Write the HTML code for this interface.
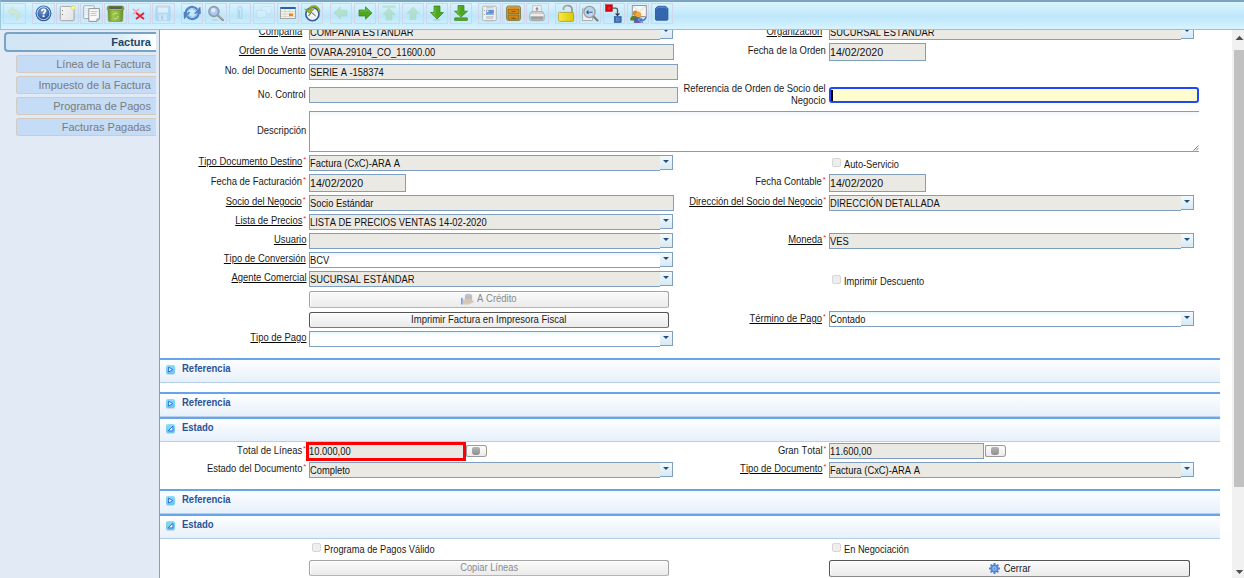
<!DOCTYPE html><html><head><meta charset="utf-8"><style>
*{box-sizing:border-box}
html,body{margin:0;padding:0;width:1244px;height:578px;overflow:hidden;background:#fff;font-family:"Liberation Sans",sans-serif;font-kerning:none}
.a{position:absolute}
#tb{left:0;top:0;width:1244px;height:30px;border-top:2px solid #7ca4be;border-bottom:1px solid #94c2d6;border-left:1px solid #9cc6da;
 background:linear-gradient(#dbf4fe 0%,#cbedfd 30%,#bde6fa 52%,#caedfd 78%,#d9f3fe 100%)}
.tbb{position:absolute;top:3px;width:22px;height:21px;border:1px solid #d0d5ea}
.tbb svg{position:absolute;left:2px;top:1px;width:16px;height:16px;overflow:visible}
#sb{left:0;top:30px;width:160px;height:548px;background:#e1eaf5;border-right:1px solid #7ba3c3}
.tab{position:absolute;right:3px;height:18px;text-align:right;font-size:11px;color:#7b7b7b;padding-right:5px;line-height:16px;
 background:#c5dcf6;border:1px solid #d3cbc2;border-right:none;border-radius:3px 0 0 3px}
.tab.sel{border:2px solid #77a4c4;border-right:none;border-radius:4px 0 0 4px;color:#1d4669;font-weight:bold;
 background:linear-gradient(90deg,#d2e5f3 0%,#d6e8f5 70%,#ffffff 100%);line-height:17px}
.l{position:absolute;font-size:10px;color:#1a1a1a;white-space:nowrap;text-align:right;line-height:11px;transform:scaleX(0.944);transform-origin:100% 0}
.l u{text-decoration:underline;text-decoration-thickness:1px;text-underline-offset:0.6px;text-decoration-color:#000}
.r{color:#e03030;font-size:8px;position:relative;top:-3px;margin-left:1px}
.f{position:absolute;height:16px;border:1px solid #7f9fbe;background:#ebe9e4;color:#111;line-height:14px;white-space:nowrap;overflow:hidden}
.f span{display:inline-block;font-size:10px;transform:scaleX(0.935);transform-origin:0 0;position:relative;top:-1px;left:-0.5px}
.f.w{background:linear-gradient(#e4f5fb,#ffffff 4px)}
.cb{position:absolute;width:13px;height:15px;border:1px solid #7f9fbe;border-left:none;background:linear-gradient(#f4f9fc,#d6e9f5)}
.cb:after{content:"";position:absolute;left:3px;top:4px;border-left:3px solid transparent;border-right:3px solid transparent;border-top:3.5px solid #1d4f80}
.btn{position:absolute;height:17px;border:1px solid #a3a3a3;border-bottom-color:#b4b4b4;border-radius:2.5px;box-shadow:inset 1px 1px 0 #fff;background:linear-gradient(#fafafa,#ebebeb);text-align:center;line-height:14px;color:#1a1a1a}
.btn span{display:inline-block;font-size:10px;transform:scaleX(.95);text-indent:0;position:relative;top:-2px}
.btn.d{border-color:#555;border-bottom-color:#7a7a7a}
.chk{position:absolute;width:9px;height:9px;border:1px solid #d6d6d6;border-radius:2px;background:#eeeeee}
.ct{position:absolute;font-size:10px;color:#1a1a1a;white-space:nowrap;line-height:11px;transform:scaleX(.925);transform-origin:0 0}
.sec{position:absolute;left:160px;width:1060px;border-top:2px solid #66a5ec;border-bottom:1px solid #b5cfeb;background:linear-gradient(#fdfeff,#e7f0fa)}
.sec b{position:absolute;left:22px;top:3px;font-size:10px;color:#2a5399;line-height:11px;transform:scaleX(.95);transform-origin:0 0}
.si{position:absolute;left:6px;top:5px;width:9px;height:9px;border-radius:2px;background:linear-gradient(#8fdcf6,#62c5ec);box-shadow:0 1px 0 rgba(0,0,0,.12)}
.calc{position:absolute;width:21px;height:12px;border:1px solid #9a9a9a;border-right-color:#a09a80;border-radius:2px 3px 3px 2px;background:linear-gradient(#fcfcfc,#ececec)}
.calc:after{content:"";position:absolute;left:5px;top:1px;width:8px;height:8px;background:linear-gradient(#b5b5b5,#8f8f8f);border-radius:2px 2px 3px 3px}
</style></head><body>
<div id="sb" class="a">
<div class="tab sel" style="top:2px;left:4px;right:3px;height:20px">Factura</div>
<div class="tab" style="top:25px;left:16px">Línea de la Factura</div>
<div class="tab" style="top:46px;left:16px">Impuesto de la Factura</div>
<div class="tab" style="top:67px;left:16px">Programa de Pagos</div>
<div class="tab" style="top:88px;left:16px">Facturas Pagadas</div>
</div>
<div class="l" style="right:938px;top:26px"><u>Compañía</u><span class="r">*</span></div>
<div class="f" style="left:309px;top:24px;width:351px;height:16px;border-right:none"><span>COMPAÑÍA ESTÁNDAR</span></div>
<div class="cb" style="left:660px;top:24px"></div>
<div class="l" style="right:418px;top:26px"><u>Organización</u><span class="r">*</span></div>
<div class="f" style="left:829px;top:24px;width:352px;height:16px;border-right:none"><span>SUCURSAL ESTÁNDAR</span></div>
<div class="cb" style="left:1181px;top:24px"></div>
<div class="l" style="right:938px;top:45px"><u>Orden de Venta</u></div>
<div class="f" style="left:309px;top:44px;width:365px;height:16px"><span>OVARA-29104_CO_11600.00</span></div>
<div class="l" style="right:418px;top:45px">Fecha de la Orden</div>
<div class="f" style="left:829px;top:43px;width:97px;height:18px;line-height:16px"><span style="font-size:11px;transform:scaleX(.965)">14/02/2020</span></div>
<div class="l" style="right:938px;top:65px">No. del Documento</div>
<div class="f" style="left:309px;top:64px;width:369px;height:16px"><span>SERIE A -158374</span></div>
<div class="l" style="right:938px;top:89px">No. Control</div>
<div class="f" style="left:309px;top:87px;width:369px;height:16px"><span></span></div>
<div class="l" style="right:418px;top:83px;line-height:12px">Referencia de Orden de Socio del<br>Negocio</div>
<div class="a" style="left:829px;top:87px;width:370px;height:16px;border:2px solid #1f48f8;border-radius:3px;background:#fffccf"><div class="a" style="left:0px;top:1px;width:1.5px;height:11px;background:#000"></div></div>
<div class="l" style="right:938px;top:125px">Descripción</div>
<div class="a" style="left:309px;top:111px;width:890px;height:41px;border:1px solid #7f9fbe;border-right:none;background:linear-gradient(#f3f8fb,#fff 6px)"></div>
<svg class="a" style="left:1193px;top:144px" width="6" height="7" viewBox="0 0 6 7"><path d="M0.5 6.5 L5.5 1.5 M3 6.5 L5.5 4" stroke="#555" stroke-width=".8"/></svg>
<div class="l" style="right:938px;top:156px"><u>Tipo Documento Destino</u><span class="r">*</span></div>
<div class="f" style="left:309px;top:155px;width:351px;height:16px;border-right:none"><span>Factura (CxC)-ARA A</span></div>
<div class="cb" style="left:660px;top:155px"></div>
<div class="chk" style="left:832px;top:158px"></div>
<div class="ct" style="left:844px;top:159px">Auto-Servicio</div>
<div class="l" style="right:938px;top:176px">Fecha de Facturación<span class="r">*</span></div>
<div class="f" style="left:309px;top:174px;width:97px;height:18px;line-height:16px"><span style="font-size:11px;transform:scaleX(.965)">14/02/2020</span></div>
<div class="l" style="right:418px;top:176px">Fecha Contable<span class="r">*</span></div>
<div class="f" style="left:829px;top:174px;width:97px;height:18px;line-height:16px"><span style="font-size:11px;transform:scaleX(.965)">14/02/2020</span></div>
<div class="l" style="right:938px;top:196px"><u>Socio del Negocio</u><span class="r">*</span></div>
<div class="f" style="left:309px;top:195px;width:365px;height:16px"><span>Socio Estándar</span></div>
<div class="l" style="right:418px;top:196px"><u>Dirección del Socio del Negocio</u><span class="r">*</span></div>
<div class="f" style="left:829px;top:195px;width:352px;height:16px;border-right:none"><span>DIRECCIÓN DETALLADA</span></div>
<div class="cb" style="left:1181px;top:195px"></div>
<div class="l" style="right:938px;top:215px"><u>Lista de Precios</u><span class="r">*</span></div>
<div class="f" style="left:309px;top:214px;width:351px;height:16px;border-right:none"><span>LISTA DE PRECIOS VENTAS 14-02-2020</span></div>
<div class="cb" style="left:660px;top:214px"></div>
<div class="l" style="right:938px;top:234px"><u>Usuario</u></div>
<div class="f" style="left:309px;top:233px;width:351px;height:16px;border-right:none"><span></span></div>
<div class="cb" style="left:660px;top:233px"></div>
<div class="l" style="right:418px;top:234px"><u>Moneda</u><span class="r">*</span></div>
<div class="f" style="left:829px;top:233px;width:352px;height:16px;border-right:none"><span>VES</span></div>
<div class="cb" style="left:1181px;top:233px"></div>
<div class="l" style="right:938px;top:253px"><u>Tipo de Conversión</u></div>
<div class="f w" style="left:309px;top:252px;width:351px;height:16px;border-right:none"><span>BCV</span></div>
<div class="cb" style="left:660px;top:252px"></div>
<div class="l" style="right:938px;top:272px"><u>Agente Comercial</u></div>
<div class="f" style="left:309px;top:271px;width:351px;height:16px;border-right:none"><span>SUCURSAL ESTÁNDAR</span></div>
<div class="cb" style="left:660px;top:271px"></div>
<div class="chk" style="left:832px;top:275px"></div>
<div class="ct" style="left:844px;top:276px">Imprimir Descuento</div>
<div class="btn" style="left:309px;top:291px;width:360px;color:#8a8a8a;text-indent:15px"><span>A Crédito</span></div>
<svg class="a" style="left:461px;top:293px" width="14" height="13" viewBox="0 0 14 13"><rect x="0" y="4.8" width="1.7" height="6.6" fill="#7aa0d8"/><ellipse cx="7.5" cy="2.8" rx="3.6" ry="2" fill="#c4c4c4"/><rect x="3.9" y="2.8" width="7.2" height="4.6" fill="#bdbdbd"/><path d="M2 6.2 H8.5 Q10.5 6.2 11.5 7.4 L13.2 8.6 Q12.5 9.8 10.5 10.2 L8 11.4 H2 Z" fill="#d9cab8"/><path d="M5 8.2 H10.5" stroke="#c7b49c" stroke-width=".6"/></svg>
<div class="btn d" style="left:309px;top:312px;width:360px;height:16px;line-height:13px"><span>Imprimir Factura en Impresora Fiscal</span></div>
<div class="l" style="right:418px;top:313px"><u>Término de Pago</u><span class="r">*</span></div>
<div class="f w" style="left:829px;top:311px;width:352px;height:16px;border-right:none"><span>Contado</span></div>
<div class="cb" style="left:1181px;top:311px"></div>
<div class="l" style="right:938px;top:332px"><u>Tipo de Pago</u></div>
<div class="f w" style="left:309px;top:331px;width:351px;height:16px;border-right:none"><span></span></div>
<div class="cb" style="left:660px;top:331px"></div>
<div class="sec" style="top:358px;height:25px"><div class="si"><svg class="a" style="left:0;top:0" width="9" height="9" viewBox="0 0 9 9"><path d="M2.6 2.2 L6.9 4.6 L2.6 7 Z" fill="#fff" stroke="#2a6de6" stroke-width="1" stroke-linejoin="round"/></svg></div><b>Referencia</b></div>
<div class="sec" style="top:392px;height:25px"><div class="si"><svg class="a" style="left:0;top:0" width="9" height="9" viewBox="0 0 9 9"><path d="M2.6 2.2 L6.9 4.6 L2.6 7 Z" fill="#fff" stroke="#2a6de6" stroke-width="1" stroke-linejoin="round"/></svg></div><b>Referencia</b></div>
<div class="sec" style="top:417px;height:25px"><div class="si"><svg class="a" style="left:0;top:0" width="9" height="9" viewBox="0 0 9 9"><path d="M6.9 2.2 V6.9 H2.2 Z" fill="#fff" stroke="#2a6de6" stroke-width="1" stroke-linejoin="round"/></svg></div><b>Estado</b></div>
<div class="l" style="right:938px;top:445px">Total de Líneas<span class="r">*</span></div>
<div class="a" style="left:306px;top:442px;width:160px;height:19px;border:3px solid #f00;background:#ebe9e4;line-height:12px;color:#111;overflow:hidden"><span style="display:inline-block;font-size:10px;transform:scaleX(.935);transform-origin:0 0;position:relative;top:-1px">10.000,00</span></div>
<div class="calc" style="left:466px;top:445px"></div>
<div class="l" style="right:418px;top:445px">Gran Total<span class="r">*</span></div>
<div class="f" style="left:829px;top:443px;width:155px;height:16px"><span>11.600,00</span></div>
<div class="calc" style="left:985px;top:445px"></div>
<div class="l" style="right:938px;top:463px">Estado del Documento<span class="r">*</span></div>
<div class="f" style="left:309px;top:462px;width:351px;height:16px;border-right:none"><span>Completo</span></div>
<div class="cb" style="left:660px;top:462px"></div>
<div class="l" style="right:418px;top:463px"><u>Tipo de Documento</u><span class="r">*</span></div>
<div class="f" style="left:829px;top:462px;width:352px;height:16px;border-right:none"><span>Factura (CxC)-ARA A</span></div>
<div class="cb" style="left:1181px;top:462px"></div>
<div class="sec" style="top:489px;height:25px"><div class="si"><svg class="a" style="left:0;top:0" width="9" height="9" viewBox="0 0 9 9"><path d="M2.6 2.2 L6.9 4.6 L2.6 7 Z" fill="#fff" stroke="#2a6de6" stroke-width="1" stroke-linejoin="round"/></svg></div><b>Referencia</b></div>
<div class="sec" style="top:514px;height:25px"><div class="si"><svg class="a" style="left:0;top:0" width="9" height="9" viewBox="0 0 9 9"><path d="M6.9 2.2 V6.9 H2.2 Z" fill="#fff" stroke="#2a6de6" stroke-width="1" stroke-linejoin="round"/></svg></div><b>Estado</b></div>
<div class="chk" style="left:312px;top:543px"></div>
<div class="ct" style="left:324px;top:544px">Programa de Pagos Válido</div>
<div class="chk" style="left:832px;top:543px"></div>
<div class="ct" style="left:844px;top:544px">En Negociación</div>
<div class="btn" style="left:309px;top:560px;width:360px;height:16px;color:#8a8a8a"><span style="transform:scaleX(.93)">Copiar Líneas</span></div>
<div class="btn d" style="left:829px;top:560px;width:361px;border-bottom-color:#888;text-indent:15px"><span style="top:-1px">Cerrar</span></div>
<svg class="a" style="left:989px;top:563px" width="11" height="11" viewBox="0 0 11 11"><g fill="#4b87d9"><circle cx="5.5" cy="5.5" r="4"/><rect x="4.5" y="0" width="2" height="11" transform="rotate(0 5.5 5.5)"/><rect x="4.5" y="0" width="2" height="11" transform="rotate(45 5.5 5.5)"/><rect x="4.5" y="0" width="2" height="11" transform="rotate(90 5.5 5.5)"/><rect x="4.5" y="0" width="2" height="11" transform="rotate(135 5.5 5.5)"/></g><circle cx="5.5" cy="5.5" r="2.2" fill="#9cc0ee"/><circle cx="5.5" cy="5.5" r="1.1" fill="#5a8fd8"/></svg>
<div class="a" style="left:1232px;top:30px;width:12px;height:548px;background:#f1f1f1"></div>
<div class="a" style="left:1234px;top:50px;width:10px;height:437px;background:#c1c1c1"></div>
<svg class="a" style="left:1232px;top:30px" width="12" height="548" viewBox="0 0 12 548"><path d="M3.5 10 L7.5 5.8 L11.5 10 Z" fill="#505050"/><path d="M3.8 540 L7.5 544 L11.2 540 Z" fill="#505050"/></svg>
<div id="tb" class="a"></div>
<div class="tbb" style="left:3px;width:23px"><svg viewBox="0 0 16 16" overflow="visible"><g opacity=".55"><path d="M1.5 6.5 L7 1.5 L7 4.3 C11.5 4.3 14.2 7.5 13.6 11 C13.2 13.2 11.8 14.6 10.3 15.3 C11.6 12.6 11 8.6 7 8.6 L7 11.5 Z" fill="#d3e5b4" stroke="#c1d69c" stroke-width=".6"/></g></svg></div>
<div class="tbb" style="left:32px;width:23px"><svg viewBox="0 0 16 16" overflow="visible"><defs><radialGradient id="hg" cx=".45" cy=".35" r=".7"><stop offset="0" stop-color="#7d9fd0"/><stop offset=".6" stop-color="#3563a6"/><stop offset="1" stop-color="#22477f"/></radialGradient></defs><circle cx="8.5" cy="8.3" r="7.9" fill="url(#hg)"/><circle cx="8.5" cy="8.3" r="6.4" fill="none" stroke="#fff" stroke-width=".8" opacity=".9"/><path d="M6 6.3 C6 4.3 7.3 3.6 8.6 3.6 C10.2 3.6 11.3 4.5 11.3 5.9 C11.3 7.6 9.4 7.8 9.4 9.3 L7.7 9.3 C7.7 7.3 9.4 7 9.4 6 C9.4 5.4 9 5.1 8.5 5.1 C8 5.1 7.7 5.5 7.7 6.3 Z" fill="#fff"/><rect x="7.6" y="10.3" width="1.9" height="1.8" fill="#fff"/></svg></div>
<div class="tbb" style="left:56px;width:23px"><svg viewBox="0 0 16 16" overflow="visible"><defs><linearGradient id="ng" x1="0" y1="0" x2="1" y2="1"><stop offset="0" stop-color="#f7f7f7"/><stop offset="1" stop-color="#e2e2e2"/></linearGradient></defs><rect x="1.3" y="1.4" width="13.8" height="14.3" rx="1.2" fill="url(#ng)" stroke="#9e9e9e" stroke-width=".9"/><circle cx="3.4" cy="5.6" r=".55" fill="#666"/><circle cx="3.4" cy="9.4" r=".55" fill="#666"/><circle cx="14.2" cy="2.6" r="2.6" fill="#eee35a" opacity=".85"/><circle cx="14.2" cy="2.6" r="1.2" fill="#fffde8"/></svg></div>
<div class="tbb" style="left:80px;width:23px"><svg viewBox="0 0 16 16" overflow="visible"><rect x="0.7" y="0.7" width="10.6" height="12.8" rx=".6" fill="#eef6fc" stroke="#a4a8ac" stroke-width=".9"/><path d="M2.2 3.5h6.5M2.2 5.5h6.5M2.2 7.5h6.5M2.2 9.5h6.5" stroke="#cbd9e6" stroke-width=".6"/><path d="M5.8 3.6 H16.4 V13.8 L13.8 16.4 H5.8 Z" fill="#f8f8f8" stroke="#8a8a8a" stroke-width=".9"/><path d="M13.8 16.4 V13.8 H16.4 Z" fill="#d0d0d0" stroke="#8a8a8a" stroke-width=".6"/><path d="M7.5 6.5h7M7.5 8.5h6M7.5 10.5h6" stroke="#9a9a9a" stroke-width=".55"/></svg></div>
<div class="tbb" style="left:104px;width:23px"><svg viewBox="0 0 16 16" overflow="visible"><defs><linearGradient id="tg" x1="0" x2="1"><stop offset="0" stop-color="#6d8e2c"/><stop offset=".3" stop-color="#9cc447"/><stop offset=".7" stop-color="#90b83f"/><stop offset="1" stop-color="#6a8a2a"/></linearGradient></defs><path d="M0.2 2.8 Q0.2 0.9 2 0.9 H15 Q16.8 0.9 16.8 2.8 V4.8 H0.2 Z" fill="#7c9c36" stroke="#5f7a26" stroke-width=".5"/><path d="M2 1.6 H15 L14.6 4.6 H2.4 Z" fill="#5a5a5a"/><rect x="2.2" y="4.2" width="12.6" height=".9" fill="#cfcfcf"/><path d="M1 5 H16 L15.6 15.6 Q15.5 16.5 14.6 16.5 H2.4 Q1.5 16.5 1.4 15.6 Z" fill="url(#tg)" stroke="#60802a" stroke-width=".5"/><path d="M6.3 10.2 A2.6 2.6 0 0 1 10.5 8.6 M11 11 A2.6 2.6 0 0 1 7 13.4" fill="none" stroke="#e6f2c8" stroke-width="1" opacity=".7"/></svg></div>
<div class="tbb" style="left:128px;width:23px"><svg viewBox="0 0 16 16" overflow="visible"><path d="M2 4 L8 9 M8 4 L2 9" stroke="#f7a0a8" stroke-width="1.6"/><path d="M5 8 L13 14 M13 8 L5 14" stroke="#ee1c2e" stroke-width="1.9"/></svg></div>
<div class="tbb" style="left:152px;width:23px"><svg viewBox="0 0 16 16" overflow="visible"><g opacity=".55"><rect x="1" y="1" width="14" height="14.5" rx="1" fill="#a9cdef" stroke="#8fb7e0" stroke-width=".8"/><rect x="3" y="1.5" width="10" height="6" fill="#e9f3fb"/><rect x="3" y="1.5" width="10" height="1" fill="#e9a9a9"/><rect x="4" y="9.5" width="8" height="6" fill="#d5e6f4"/><rect x="6" y="10.5" width="2" height="4" fill="#9fb9d2"/></g></svg></div>
<div class="tbb" style="left:181px"><svg viewBox="0 0 16 16" overflow="visible"><g transform="translate(8.2 8) scale(1.05 1) translate(-8 -8)"><g stroke="#3566aa" stroke-width=".5"><path d="M2.6 9 A5.4 5.4 0 0 1 12.4 4.9" stroke="#5283c6" stroke-width="3.2" fill="none"/><path d="M10.2 8.4 L15.9 8.6 L15.5 2.2 Z" fill="#5283c6"/><path d="M13.4 7 A5.4 5.4 0 0 1 3.6 11.1" stroke="#5283c6" stroke-width="3.2" fill="none"/><path d="M5.8 7.6 L0.1 7.4 L0.5 13.8 Z" fill="#5283c6"/></g><path d="M3.3 8.2 A4.7 4.7 0 0 1 11.6 5" stroke="#d6e4f6" stroke-width=".9" fill="none" opacity=".9"/><path d="M12.7 7.8 A4.7 4.7 0 0 1 4.4 11" stroke="#d6e4f6" stroke-width=".9" fill="none" opacity=".8"/></g></svg></div>
<div class="tbb" style="left:205px"><svg viewBox="0 0 16 16" overflow="visible"><ellipse cx="7" cy="15" rx="3.5" ry="1" fill="#000" opacity=".07"/><path d="M10 10.5 L14.8 15" stroke="#8c8c8c" stroke-width="2.3" stroke-linecap="round"/><path d="M10.3 10.4 L14.6 14.4" stroke="#d0d0d0" stroke-width=".6"/><circle cx="5.9" cy="6.5" r="5.1" fill="#a9c9f0" stroke="#9a9a9a" stroke-width="1.4"/><circle cx="5.9" cy="6.5" r="4.1" fill="none" stroke="#6f9fe0" stroke-width=".6"/><circle cx="5.3" cy="5.3" r="2.3" fill="#e8f1fb" opacity=".85"/></svg></div>
<div class="tbb" style="left:229px"><svg viewBox="0 0 16 16" overflow="visible"><path d="M6 14 V4 C6 2.3 7 1.5 8 1.5 C9 1.5 10 2.3 10 4 V12 C10 13 9.4 13.5 8.5 13.5 C7.6 13.5 7.5 12.8 7.5 12 V5" fill="none" stroke="#a9cbe8" stroke-width="1.1" opacity=".8"/></svg></div>
<div class="tbb" style="left:253px"><svg viewBox="0 0 16 16" overflow="visible"><g opacity=".35"><path d="M6 1.5 H15 V8.5 H13 L14 10.5 L11 8.5 H6 Z" fill="#e8f2fa" stroke="#b8cddd" stroke-width=".8"/><path d="M1 5.5 H10 V12.5 H5 L2 14.5 L3 12.5 H1 Z" fill="#f2f7fb" stroke="#b8cddd" stroke-width=".8"/></g></svg></div>
<div class="tbb" style="left:277px"><svg viewBox="0 0 16 16" overflow="visible"><rect x="0.5" y="2.5" width="15" height="11" fill="#f3f1ea" stroke="#9a968a" stroke-width=".8"/><rect x="0.5" y="2" width="15" height="2" fill="#2f5ea6"/><path d="M1 6.5H15M1 9H15M1 11.5H15M5 4V13.5M10 4V13.5" stroke="#d3cfc4" stroke-width=".7"/><rect x="9" y="8.6" width="4" height="2.4" rx=".6" fill="#f0841e"/></svg></div>
<div class="tbb" style="left:301px"><svg viewBox="0 0 16 16" overflow="visible"><circle cx="8.4" cy="9.1" r="6.6" fill="#f2f2f2" stroke="#2f5a9e" stroke-width="1.6"/><path d="M4.5 11 L7.5 7.4 L11.5 10.8" fill="none" stroke="#555" stroke-width="1"/><path d="M4.6 4.6 C4.8 1.8 7.5 0.3 10.5 0.5 C13.5 0.8 15.9 3.2 16.1 7 L14.6 7 C14.3 4.6 12.8 2.4 10.4 2.2 C8.4 2 6.8 3 6.6 4.6 Z" fill="#8fac26" stroke="#6d861a" stroke-width=".4"/><path d="M0.6 4.2 L10.2 4.2 L5.4 8.4 Z" fill="#93b02a" stroke="#6d861a" stroke-width=".4"/></svg></div>
<div class="tbb" style="left:330px"><svg viewBox="0 0 16 16" overflow="visible"><g opacity=".35"><path d="M1 8 L7.5 1.8 V5 H14 V11 H7.5 V14.2 Z" fill="#8fd07f" stroke="#7ac06a" stroke-width=".6"/></g></svg></div>
<div class="tbb" style="left:354px"><svg viewBox="0 0 16 16" overflow="visible"><path d="M15 8 L8.5 1.8 V5 H2 V11 H8.5 V14.2 Z" fill="#4ea720" stroke="#3a7e16" stroke-width=".7"/><path d="M3 6 H9.3 V3.8 L13.5 8" fill="none" stroke="#8bd660" stroke-width=".7" opacity=".8"/></svg></div>
<div class="tbb" style="left:378px"><svg viewBox="0 0 16 16" overflow="visible"><g opacity=".35"><rect x="1.5" y="0.5" width="13" height="2.3" fill="#8fd07f"/><path d="M8 3 L14.2 9.5 H11 V15 H5 V9.5 H1.8 Z" fill="#8fd07f" stroke="#7ac06a" stroke-width=".6"/></g></svg></div>
<div class="tbb" style="left:402px"><svg viewBox="0 0 16 16" overflow="visible"><g opacity=".35"><path d="M8 2 L14.2 8.5 H11 V14.5 H5 V8.5 H1.8 Z" fill="#8fd07f" stroke="#7ac06a" stroke-width=".6"/></g></svg></div>
<div class="tbb" style="left:426px"><svg viewBox="0 0 16 16" overflow="visible"><ellipse cx="8" cy="14.8" rx="4" ry="1" fill="#000" opacity=".1"/><path d="M8 14 L1.5 7.5 H5 V1 H11 V7.5 H14.5 Z" fill="#4ea720" stroke="#3a7e16" stroke-width=".7"/><path d="M6 2 V8.5 H3.6 L8 12.6" fill="none" stroke="#8bd660" stroke-width=".7" opacity=".8"/></svg></div>
<div class="tbb" style="left:450px"><svg viewBox="0 0 16 16" overflow="visible"><path d="M8 12 L1.5 6.2 H5 V0.5 H11 V6.2 H14.5 Z" fill="#4ea720" stroke="#3a7e16" stroke-width=".7"/><rect x="1.5" y="12.8" width="13" height="2.7" rx=".6" fill="#4ea720" stroke="#3a7e16" stroke-width=".6"/><path d="M6 1.5 V7 H3.6 L8 11" fill="none" stroke="#8bd660" stroke-width=".7" opacity=".8"/></svg></div>
<div class="tbb" style="left:478px;width:23px"><svg viewBox="0 0 16 16" overflow="visible"><ellipse cx="8.5" cy="15.8" rx="5" ry=".8" fill="#000" opacity=".1"/><rect x="1.6" y="1.2" width="13.7" height="14.4" rx="1" fill="#f0f0f0" stroke="#a9a9a9" stroke-width=".8"/><rect x="5.2" y="4.8" width="7.7" height="5.1" fill="#5f93d6"/><circle cx="6.6" cy="6.2" r="1" fill="#f6f3c0"/><path d="M5.2 9.9 L8 8.2 L10 9 L12.9 7.4 V9.9Z" fill="#8fb6e4"/><path d="M5 2.8H12.5M5 11.8H12.8M5 13.2H12" stroke="#9a9a9a" stroke-width=".6"/><circle cx="3.3" cy="5.5" r=".5" fill="#777"/><circle cx="3.3" cy="9.6" r=".5" fill="#777"/></svg></div>
<div class="tbb" style="left:502px;width:23px"><svg viewBox="0 0 16 16" overflow="visible"><rect x="1.5" y="1" width="14" height="14.5" rx="2" fill="#e2b868" stroke="#7d6d2e" stroke-width=".8"/><rect x="2.4" y="2" width="12.2" height="1.6" fill="#ef8f10"/><rect x="2.6" y="3.8" width="11.8" height="5.4" fill="#79692a"/><rect x="3.6" y="4.6" width="9.8" height="3.8" fill="#d9860e"/><rect x="2.6" y="9.6" width="11.8" height="5" fill="#79692a"/><rect x="3.6" y="10.4" width="9.8" height="3.4" fill="#d9860e"/><rect x="6.5" y="6" width="4" height="1" fill="#6b5e28"/><rect x="6.5" y="12.6" width="4" height="1.2" fill="#6b5e28"/></svg></div>
<div class="tbb" style="left:526px;width:23px"><svg viewBox="0 0 16 16" overflow="visible"><ellipse cx="8" cy="15.6" rx="5.5" ry=".9" fill="#000" opacity=".12"/><rect x="3.8" y="0.6" width="8.4" height="7.5" fill="#eeeeee" stroke="#b5b5b5" stroke-width=".6"/><path d="M8 1.8 L6.3 4.2 H7.4 V6 H8.6 V4.2 H9.7 Z" fill="#8a8a8a"/><path d="M2.5 6.6 H13.5 L15.2 9.6 V14.6 Q15.2 15.4 14.4 15.4 H1.6 Q0.8 15.4 0.8 14.6 V9.6 Z" fill="#cfcfcf" stroke="#8f8f8f" stroke-width=".6"/><path d="M1.3 9.3 H14.7 V10.8 H1.3 Z" fill="#f6f6f6"/><path d="M2 12.2H14M2 13.9H14" stroke="#7d7d7d" stroke-width=".9"/></svg></div>
<div class="tbb" style="left:555px"><svg viewBox="0 0 16 16" overflow="visible"><path d="M5.5 5 V4.5 C5.5 1.8 7.4 0.6 9.8 0.6 C12.2 0.6 14 1.8 14 4.5 V8" fill="none" stroke="#9c9c9c" stroke-width="1.9"/><path d="M6 4.2 C6.2 2.2 7.8 1.2 9.8 1.2" fill="none" stroke="#e2e2e2" stroke-width=".6"/><defs><linearGradient id="lk" x1="0" x2="1"><stop offset="0" stop-color="#fbf07a"/><stop offset=".15" stop-color="#f4e43a"/><stop offset="1" stop-color="#dcc800"/></linearGradient></defs><rect x="0.6" y="7.4" width="15" height="9" rx="1" fill="url(#lk)" stroke="#b39a10" stroke-width=".8"/></svg></div>
<div class="tbb" style="left:579px"><svg viewBox="0 0 16 16" overflow="visible"><rect x="0.5" y="4" width="10" height="11.5" fill="#efefef" stroke="#9a9a9a" stroke-width=".7"/><path d="M11 11 L15.5 15.5" stroke="#7f7f7f" stroke-width="2.3" stroke-linecap="round"/><circle cx="7.5" cy="7" r="5.6" fill="#b9d3ee" fill-opacity=".85" stroke="#9b9b9b" stroke-width="1.3"/><path d="M4.5 7.3 H10.5 M4.5 7.3 L6.5 5.5 M4.5 7.3 L6.5 9" stroke="#2f5e9a" stroke-width="1.1" fill="none"/></svg></div>
<div class="tbb" style="left:603px"><svg viewBox="0 0 16 16" overflow="visible"><rect x="-0.5" y="-0.3" width="7" height="6.8" fill="#d8000c" stroke="#a00" stroke-width=".4"/><rect x="1.5" y="1.6" width="3" height="3" fill="#f02020"/><path d="M6.6 3.2 H9.6 C10.8 3.2 11.5 3.9 11.5 5.1 V8.8" fill="none" stroke="#555" stroke-width="1.3"/><path d="M8.8 8.4 H14.2 L11.5 11.2 Z" fill="#333"/><rect x="8.2" y="11.4" width="7" height="6.2" fill="#3a6db5" stroke="#2b5592" stroke-width=".5"/><rect x="10.4" y="13.2" width="2.6" height="2.6" fill="none" stroke="#7aa2da" stroke-width=".6"/></svg></div>
<div class="tbb" style="left:627px"><svg viewBox="0 0 16 16" overflow="visible"><rect x="2.3" y="0.5" width="14" height="11" fill="#f7f7f7" stroke="#8f8f8f" stroke-width=".9"/><path d="M2.6 0.8 L9.3 6.5 L16 0.8" fill="none" stroke="#c4c4c4" stroke-width=".6"/><circle cx="5.4" cy="8.2" r="2.6" fill="#d98b2a"/><path d="M0.2 15 Q0.2 10.8 4.4 10.8 Q6.8 10.8 7.4 13 V15.5 H0.2 Z" fill="#5f7d27"/><circle cx="8.6" cy="9.4" r="2.7" fill="#f2a53a"/><path d="M4.2 17.5 Q4.2 12.6 8.6 12.6 Q12 12.6 12.6 15.5 V17.5 Z" fill="#3d6bb3" stroke="#6a3f90" stroke-width=".7"/><path d="M17 11 C17 14.5 14.5 16.6 11.2 16.4 L11.8 18.2 L8 14.6 L12.6 12.4 L12 14.2 C14 14.4 15.2 13.2 15.4 10.6 Z" fill="#3f72c6" stroke="#e6eefa" stroke-width=".45"/></svg></div>
<div class="tbb" style="left:651px"><svg viewBox="0 0 16 16" overflow="visible"><path d="M3.8 1.3 H11.6 L13.9 3.6 V14.2 Q13.9 15.2 12.9 15.2 H2.5 Q1.5 15.2 1.5 14.2 V3.6 Z" fill="#3466ad" stroke="#23508f" stroke-width=".8"/><path d="M2.4 3.9 L4.1 2.2 H11.3 L13 3.9" fill="none" stroke="#7aa3dc" stroke-width=".7"/></svg></div>
</body></html>
